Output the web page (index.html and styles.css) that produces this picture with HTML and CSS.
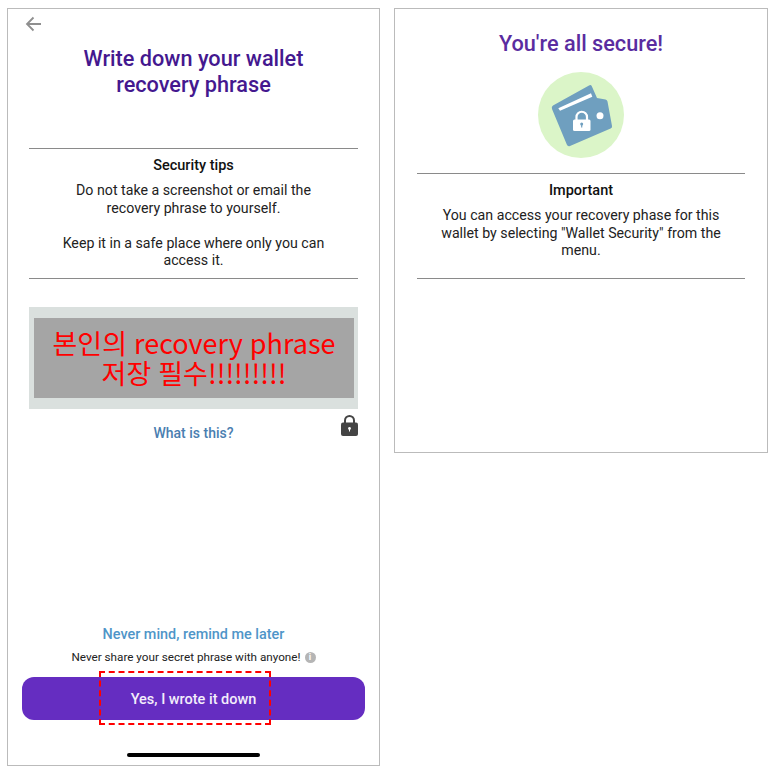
FILE: index.html

```html
<!DOCTYPE html>
<html lang="en">
<head>
  <meta charset="UTF-8" />
  <title>Wallet recovery phrase</title>
  <link rel="stylesheet" href="styles.css">
</head>
<body>
  <div class="screens">
    <div class="screen screen-left">
      <svg class="back" width="18" height="16" viewBox="0 0 18 16">
        <path d="M16 8H2.500M8.500 1.500 2 8l6.500 6.500" fill="none" stroke="#8f8f8f" stroke-width="1.800"/>
      </svg>
      <h1>Write down your wallet<br>recovery phrase</h1>

      <div class="tips">
        <h2>Security tips</h2>
        <p>Do not take a screenshot or email the<br>recovery phrase to yourself.</p>
        <p>Keep it in a safe place where only you can<br>access it.</p>
      </div>

      <div class="phrase">
        <div class="phrase-cover">본인의 recovery phrase<br>저장 필수!!!!!!!!!</div>
      </div>

      <div class="what-row">
        <a class="link what">What is this?</a>
        <svg class="lock" width="17" height="22" viewBox="0 0 17 22">
          <path d="M4 10V6.500a4.500 4.500 0 0 1 9 0V10" fill="none" stroke="#444" stroke-width="2"/>
          <rect x="0" y="8.500" width="17" height="13.500" rx="2" fill="#444"/>
          <circle cx="8.500" cy="14.500" r="1.400" fill="#fff"/>
          <rect x="8" y="14.500" width="1" height="3" fill="#fff"/>
        </svg>
      </div>

      <div class="bottom">
        <a class="link later">Never mind, remind me later</a>
        <div class="warning">
          Never share your secret phrase with anyone!
          <span class="info">i</span>
        </div>
        <div class="button-wrap">
          <button class="confirm">Yes, I wrote it down</button>
          <div class="highlight"></div>
        </div>
        <div class="home-bar"></div>
      </div>
    </div>

    <div class="screen screen-right">
      <h1 class="secure-title">You're all secure!</h1>
      <div class="badge">
        <svg width="86" height="86" viewBox="0 0 86 86">
          <circle cx="43" cy="43" r="43" fill="#dbf5c8"/>
          <path d="M15 33.500 51 13.500a2 2 0 0 1 2.800.800L59 26l8.500 1.500a2.500 2.500 0 0 1 2 2L74 54a2 2 0 0 1-1.400 2.400L32 74a2.500 2.500 0 0 1-3.200-1.400L14 37a3 3 0 0 1 1-3.500z" fill="#6f9fbf"/>
          <path d="M20.300 36.300 53 21.300l1.300 3.400L22 38.700z" fill="#fff"/>
          <circle cx="62" cy="43.700" r="3.500" fill="#fff"/>
          <path d="M38.500 49v-4a5 5 0 0 1 10.500 0v4" fill="none" stroke="#fff" stroke-width="2.200"/>
          <rect x="35" y="47.500" width="17.500" height="11.500" rx="1.500" fill="#fff"/>
          <circle cx="43.700" cy="52" r="1.500" fill="#6f9fbf"/>
          <rect x="43.100" y="52" width="1.200" height="3.500" fill="#6f9fbf"/>
        </svg>
      </div>
      <div class="tips tips-right">
        <h2>Important</h2>
        <p>You can access your recovery phase for this<br>wallet by selecting "Wallet Security" from the<br>menu.</p>
      </div>
    </div>
  </div>
</body>
</html>
```

FILE: styles.css

```css
* {
  box-sizing: border-box;
}
body {
  margin: 0;
  background: #fff;
  font-family: "Roboto", "Noto Sans CJK KR", sans-serif;
  color: #222;
}
.screens {
  display: flex;
  align-items: flex-start;
  gap: 14px;
  padding: 8px 0 0 7px;
}
.screen {
  border: 1px solid #bbb;
  background: #fff;
}
.screen-left {
  width: 373px;
  height: 758px;
  display: flex;
  flex-direction: column;
  padding: 0 21px;
  position: relative;
}
.screen-right {
  width: 374px;
  height: 445px;
  padding: 0 22px;
}
.back {
  margin: 7px 0 0 -4px;
  display: block;
}
h1 {
  margin: 14px 0 0;
  font-size: 21.700px;
  line-height: 26px;
  font-weight: 500;
  color: #44188f;
  text-align: center;
}
.tips {
  margin-top: 50px;
  height: 131px;
  border-top: 1px solid #8a8a8a;
  border-bottom: 1px solid #8a8a8a;
  text-align: center;
  font-size: 14.200px;
  line-height: 17.500px;
}
.tips h2 {
  margin: 8px 0 8px;
  font-size: 14.500px;
  line-height: 17px;
  font-weight: 500;
  color: #111;
}
.tips p {
  margin: 0 0 17.500px;
}
.phrase {
  margin-top: 28px;
  height: 102px;
  padding: 11px 4px 11px 5px;
  background: #dae0de;
}
.phrase-cover {
  height: 80px;
  background: #a5a5a5;
  color: #ff0000;
  font-family: "Noto Sans CJK KR", sans-serif;
  font-size: 27px;
  line-height: 30px;
  word-spacing: 1px;
  padding-top: 10px;
  text-align: center;
  white-space: nowrap;
}
.what-row {
  position: relative;
  text-align: center;
  margin-top: 15px;
}
.link {
  font-weight: 500;
  font-size: 14.400px;
  line-height: 18px;
  display: block;
}
.what {
  color: #4a7eb0;
  font-size: 14px;
}
.lock {
  position: absolute;
  right: 0;
  top: -10px;
}
.bottom {
  margin-top: auto;
  display: flex;
  flex-direction: column;
  align-items: center;
}
.later {
  color: #4f95c8;
}
.warning {
  margin-top: 5px;
  font-size: 11.700px;
  line-height: 16px;
  color: #222;
  display: flex;
  align-items: center;
  gap: 4px;
}
.info {
  width: 11px;
  height: 11px;
  border-radius: 50%;
  background: #b5b5b5;
  color: #fff;
  font-size: 9px;
  line-height: 11px;
  font-weight: 700;
  text-align: center;
}
.button-wrap {
  position: relative;
  margin-top: 12px;
  width: 343px;
}
.confirm {
  display: block;
  width: 100%;
  height: 43px;
  border: 0;
  border-radius: 12px;
  padding-top: 3px;
  background: #652dc1;
  color: #f3edfb;
  font-family: inherit;
  font-size: 14.500px;
  font-weight: 500;
}
.highlight {
  position: absolute;
  left: 77px;
  top: -6px;
  width: 172px;
  height: 54px;
  border: 2px dashed #ff0000;
}
.home-bar {
  margin: 33px 0 8px;
  width: 133px;
  height: 4px;
  border-radius: 2px;
  background: #000;
}
.secure-title {
  margin: 22px 0 0;
  color: #5a2ca0;
}
.badge {
  margin-top: 15px;
  display: flex;
  justify-content: center;
}
.tips-right {
  margin-top: 15px;
  height: 106px;
}
```
